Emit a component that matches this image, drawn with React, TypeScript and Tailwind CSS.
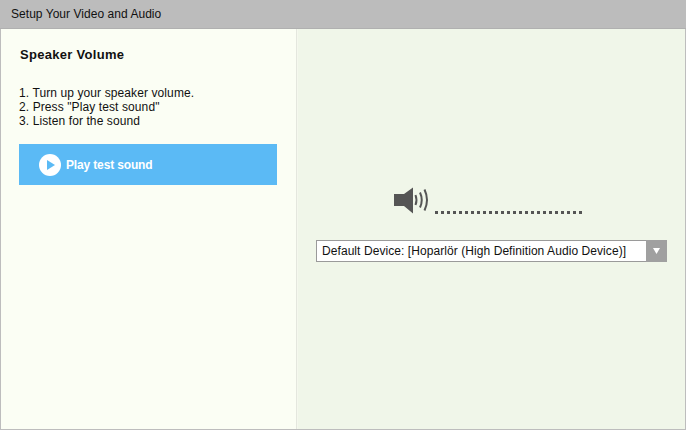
export default function App() {
  return (
    <div className="w-[686px] h-[430px] flex flex-col overflow-hidden bg-[#bdbdbd] px-px pb-px font-['Liberation_Sans',Arial,sans-serif] text-[#111]">
      <div className="h-[29px] -mx-px pl-[11px] flex items-center text-[12px] tracking-[0.04px] leading-none bg-[#bcbcbc] border-b border-[#b0b0b0] shrink-0">
        Setup Your Video and Audio
      </div>
      <div className="flex flex-1 min-h-0">
        <div className="w-[296px] shrink-0 bg-[#fbfef4] border-r border-[#e4e7de] pl-[18px] pt-[18px]">
          <h1 className="pl-px text-[13px] tracking-[0.3px] leading-[15px] font-bold">Speaker Volume</h1>
          <ol className="mt-[24px] text-[12px] tracking-[0.1px] leading-[14px]">
            <li>1. Turn up your speaker volume.</li>
            <li>2. Press "Play test sound"</li>
            <li>3. Listen for the sound</li>
          </ol>
          <button className="mt-[16px] w-[258px] h-[41px] bg-[#5bbaf5] flex items-center pl-[20px] gap-[5px] text-white text-[12px] tracking-[-0.15px] font-bold">
            <svg width="22" height="22" viewBox="0 0 22 22">
              <circle cx="11" cy="11" r="11" fill="#fff" />
              <path d="M8 6 L16 11 L8 16 Z" fill="#5bbaf5" />
            </svg>
            Play test sound
          </button>
        </div>
        <div className="w-px shrink-0 bg-[#f5f8ee]" />
        <div className="flex-1 bg-[#f0f6e9] pl-[18px] pt-[158px]">
          <div className="flex items-start pl-[77px] h-[31px]">
            <svg width="36" height="30" viewBox="0 0 36 30" className="shrink-0">
              <path d="M1 7 H11 L20 0.500 V26.500 L11 19 H1 Z" fill="#555" />
              <path d="M22.500 8 Q24.500 13 22.500 18" stroke="#555" strokeWidth="2" fill="none" />
              <path d="M27 5.500 Q30.500 13 27 20.500" stroke="#555" strokeWidth="2" fill="none" />
              <path d="M31.500 2.500 Q36.500 13 31.500 23.500" stroke="#555" strokeWidth="2" fill="none" />
            </svg>
            <div className="ml-[6px] mt-[24px] flex gap-[3px]">
              {Array.from({ length: 25 }).map((_, i) => (
                <span key={i} className="w-[3px] h-[3px] bg-[#555] block" />
              ))}
            </div>
          </div>
          <div className="mt-[22px] w-[351px] h-[22px] bg-white border border-[#9a9a9a] flex items-center justify-between text-[12px] tracking-[0.07px]">
            <span className="pl-[5px]">Default Device: [Hoparlör (High Definition Audio Device)]</span>
            <span className="w-[21px] h-[22px] -mr-px bg-[#a0a0a0] flex items-center justify-center">
              <svg width="7" height="6" viewBox="0 0 7 6"><path d="M0 0 H7 L3.500 6 Z" fill="#fff" /></svg>
            </span>
          </div>
        </div>
      </div>
    </div>
  );
}
